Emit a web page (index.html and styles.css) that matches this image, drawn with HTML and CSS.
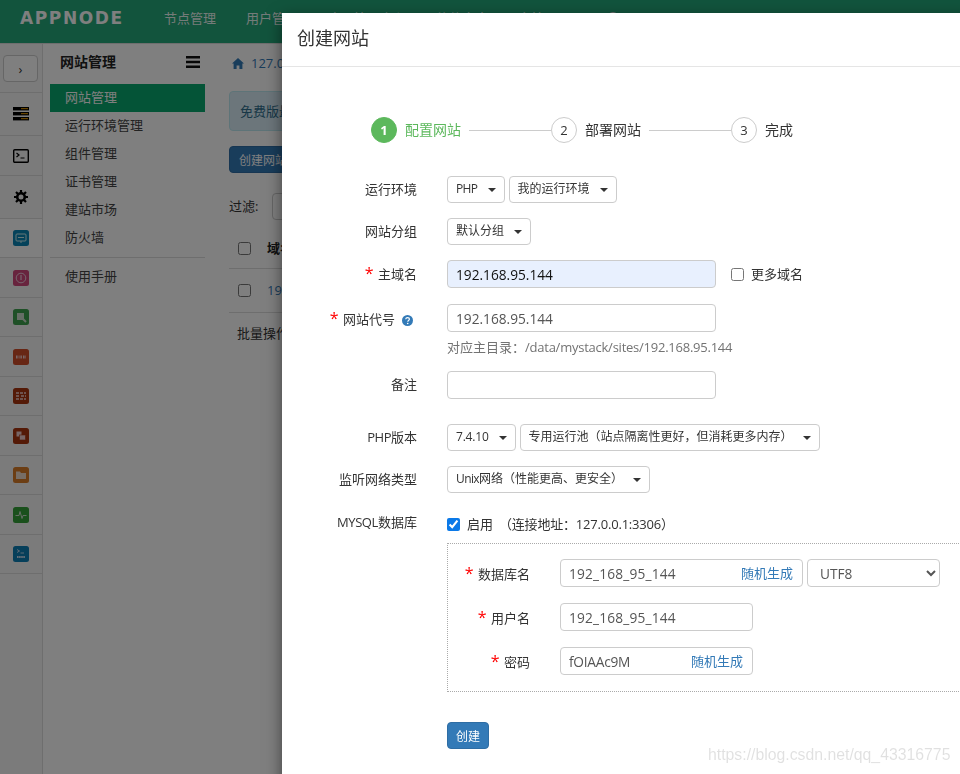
FILE: index.html
```html
<!DOCTYPE html>
<html lang="zh">
<head>
<meta charset="utf-8">
<title>创建网站</title>
<link rel="stylesheet" href="styles.css">
</head>
<body>
<header class="top">
  <span class="logo">APPNODE</span>
  <nav class="topnav">
    <span class="t1">节点管理</span><span class="t2">用户管理</span><span class="t3">应用管理中心</span><span class="t4">软件仓库</span><span class="t5">文档</span>
  </nav>
  <svg class="topicon" width="14" height="14" viewBox="0 0 14 14"><circle cx="7" cy="7" r="6" fill="#ddd"/></svg>
</header>
<div class="main">
  <aside class="rail">
    <div class="rail-top"><button class="toggle">›</button></div>
    <div class="rr h43"><svg width="16" height="14" viewBox="0 0 16 14"><rect y="0" width="16" height="3.4" fill="#000"/><rect y="5" width="16" height="3.4" fill="#000"/><rect y="10" width="16" height="3.4" fill="#000"/><rect x="8" y="1" width="7" height="1.2" fill="#c80"/><rect x="8" y="6" width="7" height="1.2" fill="#c80"/><rect x="8" y="11" width="7" height="1.2" fill="#c80"/></svg></div>
    <div class="rr h40"><svg width="16" height="14" viewBox="0 0 16 14"><rect x=".7" y=".7" width="14.6" height="12.6" rx="1" fill="none" stroke="#000" stroke-width="1.4"/><path d="M3.500 4l2.500 2-2.500 2M7.500 9h4" fill="none" stroke="#000" stroke-width="1.200"/></svg></div>
    <div class="rr h43"><svg width="14" height="14" viewBox="0 0 14 14"><circle cx="7" cy="7" r="3.800" fill="none" stroke="#000" stroke-width="2.600"/><path d="M7 0v3M7 11v3M0 7h3M11 7h3M2 2l2 2M10 10l2 2M12 2l-2 2M4 10l-2 2" stroke="#000" stroke-width="2.200"/></svg></div>
    <div class="rr h39 on"><svg width="16" height="16" viewBox="0 0 16 16"><rect width="16" height="16" rx="2.500" fill="#0b84b5"/><rect x="3" y="4" width="10" height="7" rx="1" fill="none" stroke="#cee" stroke-width="1"/><path d="M5 7.500h6M8 11v2" stroke="#cee"/></svg></div>
    <div class="rr h40"><svg width="16" height="16" viewBox="0 0 16 16"><rect width="16" height="16" rx="2.500" fill="#d0487c"/><circle cx="8" cy="8" r="4.800" fill="none" stroke="#ecd" stroke-width="1"/><path d="M8 5v5" stroke="#ecd" stroke-width="1.200"/></svg></div>
    <div class="rr h39"><svg width="16" height="16" viewBox="0 0 16 16"><rect width="16" height="16" rx="2.500" fill="#3fa04e"/><rect x="4" y="4" width="7" height="7" fill="#cdc"/><path d="M9 9l4 4" stroke="#cdc" stroke-width="2"/></svg></div>
    <div class="rr h40"><svg width="16" height="16" viewBox="0 0 16 16"><rect width="16" height="16" rx="2.500" fill="#cf4c28"/><path d="M3 8h2.500M6.500 8H9M10 8h3" stroke="#ecc" stroke-width="3" stroke-dasharray="1 .4"/></svg></div>
    <div class="rr h39"><svg width="16" height="16" viewBox="0 0 16 16"><rect width="16" height="16" rx="2.500" fill="#a8340f"/><path d="M3 5h10M3 8h3M8 8h5M3 11h10" stroke="#ecc" stroke-width="1.400" stroke-dasharray="3 1"/></svg></div>
    <div class="rr h40"><svg width="16" height="16" viewBox="0 0 16 16"><rect width="16" height="16" rx="2.500" fill="#a8340f"/><rect x="3.500" y="3.500" width="5" height="5" fill="#ecc"/><rect x="6.500" y="7" width="6" height="5" fill="#ecc" stroke="#a8340f" stroke-width=".6"/></svg></div>
    <div class="rr h39"><svg width="16" height="16" viewBox="0 0 16 16"><rect width="16" height="16" rx="2.500" fill="#d97c28"/><path d="M3 4.500h4l1 1.500h5v6H3z" fill="#edc"/></svg></div>
    <div class="rr h40"><svg width="16" height="16" viewBox="0 0 16 16"><rect width="16" height="16" rx="2.500" fill="#35a138"/><path d="M2.500 8.500h3.500l1-4 2 7 1-3h3.500" fill="none" stroke="#cdc" stroke-width="1"/></svg></div>
    <div class="rr h39"><svg width="16" height="16" viewBox="0 0 16 16"><rect width="16" height="16" rx="2.500" fill="#0c7eb5"/><path d="M4 3.500l2.500 1.500L4 6.500M7.500 7h3.500" fill="none" stroke="#cde" stroke-width=".9"/><path d="M4 11h8" stroke="#cde" stroke-width="2" stroke-dasharray="1.600 .5"/></svg></div>
  </aside>
  <aside class="subnav">
    <div class="subhead"><b>网站管理</b><svg width="14" height="12" viewBox="0 0 14 12"><path d="M0 1.300h14M0 6h14M0 10.700h14" stroke="#111" stroke-width="2.400"/></svg></div>
    <a class="item active">网站管理</a>
    <a class="item">运行环境管理</a>
    <a class="item">组件管理</a>
    <a class="item">证书管理</a>
    <a class="item">建站市场</a>
    <a class="item">防火墙</a>
    <div class="subdiv"></div>
    <a class="item">使用手册</a>
  </aside>
  <section class="content">
    <div class="crumb"><svg width="12" height="11" viewBox="0 0 12 11"><path d="M6 0L0 5.500h1.600V11h3V7.500h2.800V11h3V5.500H12z" fill="#337ab7"/></svg><span>127.0.0.1</span></div>
    <div class="alert">免费版最多可创建网站数量限制</div>
    <button class="btn-primary wide">创建网站</button>
    <div class="filter"><span>过滤:</span><span class="filter-box"></span></div>
    <div class="trow thead"><input type="checkbox"><b>域名</b></div>
    <div class="trow tbody"><input type="checkbox"><a>192.168.95.144</a></div>
    <div class="bulk">批量操作</div>
  </section>
</div>
<div class="backdrop"></div>
<div class="modal">
  <div class="modal-head">创建网站</div>
  <div class="modal-body">
    <div class="steps">
      <span class="dot done">1</span><span class="slabel done-t">配置网站</span><span class="sline"></span>
      <span class="dot">2</span><span class="slabel">部署网站</span><span class="sline"></span>
      <span class="dot">3</span><span class="slabel">完成</span>
    </div>

    <div class="row">
      <label class="lbl">运行环境</label>
      <div class="ctl"><span class="dd"><span class="tighter">PHP</span><i></i></span><span class="dd">我的运行环境<i></i></span></div>
    </div>
    <div class="row">
      <label class="lbl">网站分组</label>
      <div class="ctl"><span class="dd">默认分组<i></i></span></div>
    </div>
    <div class="row m16">
      <label class="lbl"><em>*</em> 主域名</label>
      <div class="ctl"><input class="inp auto" value="192.168.95.144"><label class="more"><input type="checkbox">更多域名</label></div>
    </div>
    <div class="row top-a m14">
      <label class="lbl lbl-pad"><em>*</em> 网站代号<svg class="help" width="11" height="11" viewBox="0 0 11 11"><circle cx="5.500" cy="5.500" r="5.500" fill="#337ab7"/><path d="M3.700 4.200c.1-1.100.9-1.600 1.900-1.600s1.800.6 1.800 1.500c0 1.300-1.500 1.200-1.600 2.600" fill="none" stroke="#fff" stroke-width="1.200"/><circle cx="5.700" cy="8.500" r=".8" fill="#fff"/></svg></label>
      <div class="ctl col"><input class="inp" value="192.168.95.144"><div class="hint">对应主目录：<span class="squeeze">/data/mystack/sites/192.168.95.144</span></div></div>
    </div>
    <div class="row m25">
      <label class="lbl">备注</label>
      <div class="ctl"><input class="inp"></div>
    </div>
    <div class="row">
      <label class="lbl"><span class="tight">PHP</span>版本</label>
      <div class="ctl"><span class="dd"><span class="tight2">7.4.10</span><i></i></span><span class="dd">专用运行池（站点隔离性更好，但消耗更多内存）<i></i></span></div>
    </div>
    <div class="row m23">
      <label class="lbl">监听网络类型</label>
      <div class="ctl"><span class="dd"><span class="tighter">Unix</span>网络（性能更高、更安全）<i></i></span></div>
    </div>
    <div class="row top-a m11">
      <label class="lbl lbl-my"><span class="squeeze2">MYSQL</span>数据库</label>
      <div class="ctl"><label class="en"><input type="checkbox" checked><span>启用</span><span class="addr">（连接地址：127.0.0.1:3306）</span></label></div>
    </div>
    <div class="dbbox">
      <div class="row m16">
        <label class="lbl db"><em>*</em> 数据库名</label>
        <div class="ctl"><div class="combo w243"><input class="under" value="192_168_95_144"><a>随机生成</a></div><select class="sel"><option>UTF8</option></select></div>
      </div>
      <div class="row m16">
        <label class="lbl db"><em>*</em> 用户名</label>
        <div class="ctl"><input class="inp w193 under" value="192_168_95_144"></div>
      </div>
      <div class="row m0">
        <label class="lbl db"><em>*</em> 密码</label>
        <div class="ctl"><div class="combo w193"><input class="pw" value="fOIAAc9M"><a>随机生成</a></div></div>
      </div>
    </div>
    <button class="btn-primary submit">创建</button>
  </div>
</div>
<div class="mark">https://blog.csdn.net/qq_43316775</div>
</body>
</html>
```

FILE: styles.css
```css
* { box-sizing: border-box; }
html, body { margin: 0; height: 100%; overflow: hidden; }
body {
  font: 13px/1.4 "Open Sans", "Noto Sans CJK SC", sans-serif;
  color: #333;
  background: #fff;
}
a { text-decoration: none; }

.top {
  height: 44px;
  background: #24a87a;
  border-bottom: 1px solid #ddd;
  display: flex;
  align-items: flex-start;
  padding: 8px 0 0 20px;
  color: #fff;
}
.logo {
  width: 144px;
  font: bold 17px/20px "DejaVu Sans", sans-serif;
  letter-spacing: 1.6px;
  color: #fff;
}
.topnav { display: flex; line-height: 20px; opacity: .9; }
.topnav span { margin-right: 30px; }
.topicon { margin: 3px 0 0 32px; }

.main { display: flex; height: 730px; }
.rail { width: 43px; background: #f6f6f6; border-right: 1px solid #ddd; flex: none; }
.rail-top { height: 49px; padding: 11px 0 0 3px; border-bottom: 1px solid #ddd; }
.toggle {
  width: 35px; height: 27px; padding: 0; background: #fff;
  border: 1px solid #ccc; border-radius: 4px; color: #333; font: 13px "Open Sans", sans-serif;
}
.rr { display: flex; align-items: center; justify-content: center; border-bottom: 1px solid #ddd; padding-right: 1px; }
.rr.on { background: #fff; }
.h43 { height: 43px; }
.h40 { height: 40px; }
.h39 { height: 39px; }

.subnav { width: 180px; padding: 0 18px 0 7px; flex: none; background: #fff; }
.subhead {
  height: 40px; display: flex; justify-content: space-between; align-items: center;
  padding: 0 5px 5px 10px; color: #222; font-size: 14px;
}
.item { display: block; height: 28px; line-height: 26px; padding-left: 15px; color: #444; }
.item.active { background: #09a86e; color: #fff; }
.subdiv { margin: 5px 0 5px; border-top: 1px solid #ddd; }

.content { padding: 0 0 0 6px; white-space: nowrap; flex: 1; min-width: 0; }
.crumb { height: 47px; display: flex; align-items: center; padding: 0 0 9px 3px; color: #337ab7; }
.crumb span { margin-left: 7px; }
.alert {
  height: 40px; line-height: 38px; padding: 0 10px; background: #d9edf7;
  border: 1px solid #bce8f1; border-radius: 4px; color: #31708f;
}
.btn-primary {
  background: #337ab7; border: 1px solid #2e6da4; border-radius: 4px; color: #fff;
  font: 12px "Open Sans", "Noto Sans CJK SC", sans-serif; padding: 0;
}
.wide { display: block; width: 90px; height: 27px; margin-top: 15px; text-align: left; padding-left: 9px; }
.filter { display: flex; align-items: center; margin-top: 20px; height: 27px; }
.filter-box { width: 100px; height: 27px; margin-left: 14px; background: #fff; border: 1px solid #ccc; border-radius: 4px; }
.trow { display: flex; align-items: center; border-bottom: 1px solid #ddd; padding-left: 9px; }
.trow input { margin: 0 16px 0 0; width: 13px; height: 13px; }
.thead { height: 49px; padding-top: 9px; color: #222; }
.tbody { height: 44px; }
.tbody a { color: #337ab7; }
.bulk { margin: 11px 0 0 8px; }

.backdrop { position: fixed; inset: 0; background: rgba(0, 0, 0, .5); }

.modal {
  position: absolute; left: 282px; top: 13px; width: 720px; height: 800px;
  background: #fff; box-shadow: 0 5px 15px rgba(0, 0, 0, .5);
}
.modal-head { height: 54px; padding: 0 15px; line-height: 50px; font-size: 18px; border-bottom: 1px solid #e5e5e5; }
.modal-body { padding-top: 50px; }

.steps { display: flex; align-items: center; padding-left: 89px; margin-bottom: 33px; }
.dot {
  width: 26px; height: 26px; border-radius: 50%; border: 1px solid #ccc; background: #fff;
  display: flex; align-items: center; justify-content: center; font-size: 13px;
}
.dot.done { background: #5cb85c; border-color: #5cb85c; color: #fff; font-weight: 700; }
.slabel { margin: 0 8px; font-size: 14px; }
.done-t { color: #5cb85c; }
.sline { width: 82px; border-top: 1px solid #ccc; }

.row { display: flex; align-items: center; margin-bottom: 15px; }
.top-a { align-items: flex-start; }
.m0 { margin-bottom: 0; }
.m11 { margin-bottom: 11px; }
.m14 { margin-bottom: 14px; }
.m16 { margin-bottom: 16px; }
.m23 { margin-bottom: 23px; }
.m25 { margin-bottom: 25px; }
.lbl { width: 135px; margin: 0 30px 2px 0; text-align: right; flex: none; line-height: 18px; }
.lbl-pad { padding-top: 5px; padding-right: 4px; margin-bottom: 0; }
.lbl-my { margin-top: -3px; margin-bottom: 0; }
.lbl em { color: #f00; font-style: normal; font-size: 16px; margin-right: 1px; }
.lbl.db { width: 82px; margin-bottom: 0; }
.help { margin-left: 7px; vertical-align: -2px; }
.tight { letter-spacing: -.5px; }
.tighter { letter-spacing: -.6px; }
.tight2 { letter-spacing: -.2px; }
.squeeze { letter-spacing: -.24px; }
.squeeze2 { letter-spacing: -.4px; }

.ctl { display: flex; align-items: center; gap: 4px; }
.col { flex-direction: column; align-items: flex-start; gap: 5px; }
.dd {
  display: inline-flex; align-items: center; height: 27px; padding: 0 8px;
  background: #fff; border: 1px solid #ccc; border-radius: 4px; font-size: 12px; white-space: nowrap;
}
.dd i {
  margin-left: 10px; width: 0; height: 0;
  border: 4px solid transparent; border-top-color: #333; border-bottom: 0;
}
.inp {
  width: 269px; height: 28px; padding: 0 8px; border: 1px solid #ccc; border-radius: 4px;
  font: 13.7px "Open Sans", sans-serif; color: #555; outline: 0;
}
.inp.auto { background: #e8f0fe; color: #111; }
.w193 { width: 193px; }
.hint { color: #737373; line-height: 20px; white-space: nowrap; }
.more { display: flex; align-items: center; margin-left: 11px; }
.more input, .en input { width: 13px; height: 13px; margin: 0 7px 0 0; }
.en { display: flex; align-items: center; height: 16px; white-space: nowrap; }
.en input { margin-right: 7px; accent-color: #0b79e8; }
.addr { margin-left: 6px; letter-spacing: -.2px; }

.dbbox {
  margin-left: 165px; width: 620px; height: 149px; padding-top: 15px;
  border: 1px dotted #aaa; border-right: 0;
}
.combo {
  display: flex; align-items: center; height: 28px; border: 1px solid #ccc; border-radius: 4px; padding: 0 9px 0 8px; background: #fff;
}
.combo input { flex: 1; min-width: 0; border: 0; padding: 0; outline: 0; font: 13.7px "Open Sans", sans-serif; color: #555; }
.combo a { color: #337ab7; flex: none; }
.under, .combo .under { letter-spacing: .2px; }
.combo .pw { letter-spacing: -.25px; }
.w243 { width: 243px; }
.sel {
  width: 133px; height: 28px; padding: 0 8px; background: #fff; border: 1px solid #ccc; border-radius: 4px;
  font: 13.7px "Open Sans", sans-serif; color: #555;
}
.submit { display: block; width: 42px; height: 27px; margin: 30px 0 0 165px; }

.mark {
  position: absolute; left: 708px; top: 744px; font: 15.8px/22px "Liberation Sans", sans-serif; color: rgba(0, 0, 0, .12);
}
```
